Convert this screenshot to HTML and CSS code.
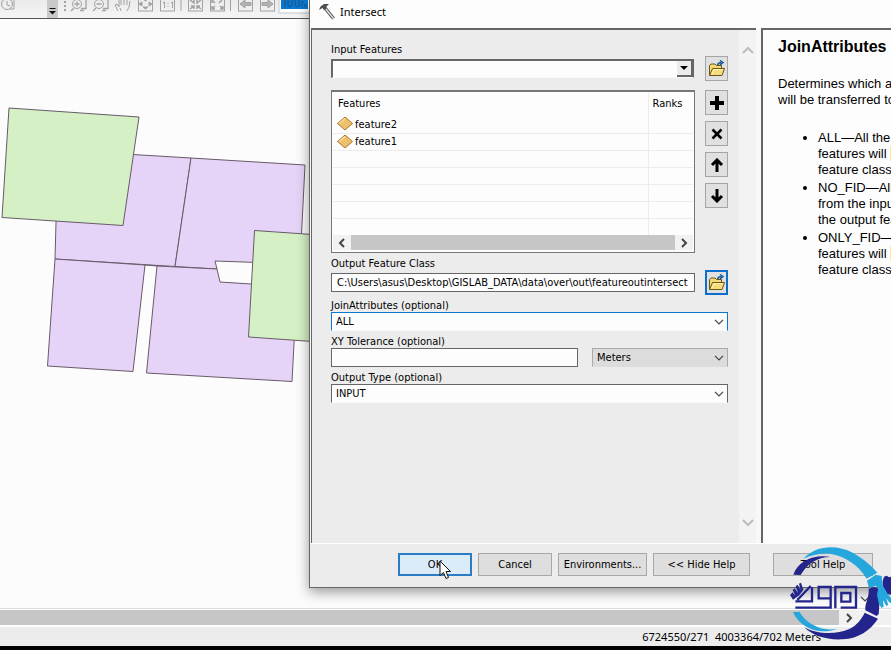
FILE: index.html
```html
<!DOCTYPE html>
<html lang="en">
<head>
<meta charset="utf-8">
<title>Intersect</title>
<link rel="stylesheet" href="styles.css">
</head>
<body>
<svg class="defs" aria-hidden="true">
  <symbol id="folder" viewBox="0 0 18 18">
    <path d="M1.500 15.500V5.500l1.500-1.500h4l1.500 1.500h5v3" fill="#f3d978" stroke="#6b5614"/>
    <path d="M1.500 15.500l3-7h12l-2.500 7z" fill="#f6dc7c" stroke="#6b5614"/>
    <path d="M4 14l2-4.500h9" fill="none" stroke="#fff3b8"/>
    <path d="M9.500 5c.5-2 2-2.500 4-2.500M12 .5l3 2-3 2.500" fill="none" stroke="#17589b" stroke-width="1.500"/>
  </symbol>
  <symbol id="chevron" viewBox="0 0 10 6"><path d="M1 .8l4 4 4-4" fill="none" stroke="#444" stroke-width="1.200"/></symbol>
  <symbol id="diamond" viewBox="0 0 18 16"><path d="M9 1l7.500 6.500L9 14 1.500 7.500z" fill="#eec06c" stroke="#a9752c"/><path d="M9 2.500L3.500 7.500" stroke="#f8dc9c" stroke-width="1.500"/></symbol>
</svg>

<div class="app">
  <header class="toolbar">
    <svg class="tools" width="310" height="18" fill="none" stroke="#a2a2a2">
      <circle cx="7" cy="4" r="5.500"/><path d="M7 1v4l3 1M14 0v9h-4"/>
      <rect x="47" y="0" width="11" height="18" fill="#c9c9c9" stroke="none"/>
      <path d="M49.500 8.500h6" stroke="#111"/><path d="M49 11h7l-3.500 3.500z" fill="#111" stroke="none"/>
      <path d="M65 1v10" stroke-width="2" stroke-dasharray="2 2"/>
      <circle cx="77" cy="4" r="4.500"/><path d="M74.500 4h5M77 1.500v5M74 8l-3 3M81 8.500h5V0M80 10.500h4" stroke-width="1.300"/>
      <circle cx="99" cy="4" r="4.500"/><path d="M96.500 4h5M96 8l-3 3M103 8.500h5V0M102 10.500h4" stroke-width="1.300"/>
      <path d="M118 11l-3-6 2-1 2 3V0M121 5V0M124 5V0M127 5V0M130 1l-1 6-2 4M121 11l-1-3"/>
      <rect x="138.500" y="-4" width="14" height="15"/><path d="M145.500 1l2.500-2h-5zM145.500 9l-2.500-2h5zM139 4l3-2v4zM152 4l-3-2v4z" fill="#a2a2a2"/>
      <rect x="160.500" y="-4" width="14" height="15"/><path d="M163 3l1.500-1v6M171 3l1.500-1v6M168 3v1M168 6v1"/>
      <path d="M181 0v11M230.500 0v11"/>
      <rect x="188.500" y="-4" width="14" height="15"/><path d="M190 0l4 3v-3M201 0l-4 3v-3M190 9l4-3M201 9l-4-3M191 6h3v3M200 6h-3v3" stroke-width="1.500"/>
      <rect x="210.500" y="-4" width="14" height="15"/><path d="M212 3V0M215 3l-3-3M222 0l-3 3M212 6v3h3M212 9l3-3M223 6v3h-3M223 9l-3-3" stroke-width="1.500"/>
      <rect x="238.500" y="-4" width="14" height="15"/><path d="M240 4l5-4v2.500h6v3h-6V8z" fill="#b2b2b2"/>
      <rect x="260.500" y="-4" width="14" height="15"/><path d="M273 4l-5-4v2.500h-6v3h6V8z" fill="#b2b2b2"/>
      <rect x="279" y="-2" width="32" height="15" fill="#fff" stroke="#c8c8c8"/>
      <rect x="281" y="0" width="27" height="9" fill="#0878d0" stroke="none"/>
      <path d="M285 0v7M288 0v5l2 2 2-2V0M295 0v5l2 2 2-2V0M303 1l-2 5M305 4v3" stroke="#20517c"/>
    </svg>
  </header>

  <main class="map">
    <svg class="parcels" aria-label="Map parcels">
      <g transform="translate(0 -19)" stroke="#685a68" stroke-width="1">
        <g fill="#e6d4f8">
          <path d="M58 150l133 8-16 108.500L55 259z"/>
          <path d="M191 158l114 7-5 99-85-3 2 8-42-2.500z"/>
          <path d="M55 259l90 6-12 106.500-85.500-5.500z"/>
          <path d="M145 265l12 1" />
          <path d="M157 266l60 3 3 13 31 2 46 3-5 94.500-145.500-8.500z"/>
        </g>
        <g fill="#d4f0c4">
          <path d="M9 108l130 9-16 108.500-121-8z"/>
          <path d="M254.500 230.500l58 4v107l-64-4.500z"/>
        </g>
      </g>
    </svg>
    <svg class="map-down" width="10" height="6"><use href="#chevron"/></svg>
  </main>
  <div class="map-scroll"><div class="map-thumb"></div><svg width="8" height="10" fill="none" stroke="#444" stroke-width="2"><path d="M2 1l4 4-4 4"/></svg></div>
  <footer class="status">6724550/271&nbsp; 4003364/702 Meters</footer>
</div>

<section class="dialog" role="dialog" aria-labelledby="dialog-title">
  <header class="titlebar">
    <svg width="18" height="18" viewBox="0 0 18 18">
      <path d="M7 5l8.500 10.500" stroke="#555" stroke-width="3.500"/><path d="M7 5l8.500 10.500" stroke="#ddd" stroke-width="1.500"/>
      <path d="M1 7l1.500-3.500L6 1h5L8.500 3.500 8 6 6 7 4.500 5z" fill="#4b4f50"/>
    </svg>
    <h1 id="dialog-title">Intersect</h1>
  </header>
  <div class="panes">
    <div class="form-pane">
      <form class="form" id="tool">
        <label for="in">Input Features</label>
        <div class="row">
          <div class="pick pick-classic"><select id="in"><option></option></select><span class="drop"><svg width="8" height="4"><path d="M0 0h8L4 4z"/></svg></span></div>
          <button class="icon" type="button" aria-label="Browse input"><svg width="18" height="18"><use href="#folder"/></svg></button>
        </div>
        <div class="row list-row">
          <div class="list">
            <table>
              <thead><tr><th>Features</th><th class="rank">Ranks</th></tr></thead>
              <tbody>
                <tr><td><span class="feature"><svg width="18" height="16"><use href="#diamond"/></svg>feature2</span></td><td></td></tr>
                <tr><td><span class="feature"><svg width="18" height="16"><use href="#diamond"/></svg>feature1</span></td><td></td></tr>
                <tr><td></td><td></td></tr>
                <tr><td></td><td></td></tr>
                <tr><td></td><td></td></tr>
                <tr><td></td><td></td></tr>
                <tr><td></td><td></td></tr>
              </tbody>
            </table>
            <div class="hscroll">
              <svg width="8" height="10" fill="none" stroke="#444" stroke-width="2"><path d="M6 1L2 5l4 4"/></svg>
              <div class="thumb"></div>
              <svg width="8" height="10" fill="none" stroke="#444" stroke-width="2"><path d="M2 1l4 4-4 4"/></svg>
            </div>
          </div>
          <div class="side">
            <button class="icon" type="button" aria-label="Add"><svg width="14" height="14"><path d="M7 0v14M0 7h14" stroke="#000" stroke-width="4"/></svg></button>
            <button class="icon" type="button" aria-label="Remove"><svg width="14" height="14"><path d="M2.500 2.500l9 9M11.500 2.500l-9 9" stroke="#000" stroke-width="2.500"/></svg></button>
            <button class="icon" type="button" aria-label="Move up"><svg width="14" height="14"><path d="M7 14V3M2 7l5-5 5 5" fill="none" stroke="#000" stroke-width="3"/></svg></button>
            <button class="icon" type="button" aria-label="Move down"><svg width="14" height="14"><path d="M7 0v11M2 7l5 5 5-5" fill="none" stroke="#000" stroke-width="3"/></svg></button>
          </div>
        </div>
        <label for="out">Output Feature Class</label>
        <div class="row">
          <input id="out" type="text" value="C:\Users\asus\Desktop\GISLAB_DATA\data\over\out\featureoutintersect">
          <button class="icon active" type="button" aria-label="Browse output"><svg width="18" height="18"><use href="#folder"/></svg></button>
        </div>
        <label for="join">JoinAttributes (optional)</label>
        <div class="pick focus"><select id="join"><option>ALL</option></select><svg width="10" height="6"><use href="#chevron"/></svg></div>
        <label for="tol">XY Tolerance (optional)</label>
        <div class="tolerance">
          <input id="tol" type="text">
          <div class="pick muted"><select aria-label="Units"><option>Meters</option></select><svg width="10" height="6"><use href="#chevron"/></svg></div>
        </div>
        <label for="type">Output Type (optional)</label>
        <div class="pick"><select id="type"><option>INPUT</option></select><svg width="10" height="6"><use href="#chevron"/></svg></div>
      </form>
      <div class="vscroll">
        <svg width="12" height="8" fill="none" stroke="#bcbcbc" stroke-width="2"><path d="M1 7l5-5 5 5"/></svg>
        <svg width="12" height="8" fill="none" stroke="#bcbcbc" stroke-width="2"><path d="M1 1l5 5 5-5"/></svg>
      </div>
    </div>
    <article class="help">
      <h2>JoinAttributes (</h2>
      <p>Determines which a<br>will be transferred to</p>
      <ul>
        <li>ALL—All the<br>features will <mark>&nbsp;</mark><br>feature class</li>
        <li>NO_FID—All<br>from the input<br>the output fea</li>
        <li>ONLY_FID—<br>features will <mark>&nbsp;</mark><br>feature class</li>
      </ul>
    </article>
  </div>
  <footer class="actions">
    <button class="default" type="submit" form="tool">OK</button>
    <button type="button">Cancel</button>
    <button class="env" type="button">Environments...</button>
    <button class="hide" type="button">&lt;&lt; Hide Help</button>
    <button class="tool-help" type="button">Tool Help</button>
  </footer>
</section>

<svg class="cursor" width="13" height="20" viewBox="0 0 13 20"><path d="M1 1v14.500l3.500-3 2.500 6 2.500-1-2.500-6h4.500z" fill="#fff" stroke="#111"/></svg>

<svg class="logo" width="121" height="110" viewBox="0 0 363 330" aria-label="Logo">
  <path d="M100 56C136 16 200 12 248 38c34 19 60 42 74 60l-32 18C266 76 226 48 180 41c-28-3-54 4-80 15z" fill="#25a6dc"/>
  <path d="M70 104C84 64 130 42 182 51c-42 0-72 22-90 54z" fill="#23248c"/>
  <path d="M69 216h20c20 36 68 60 112 50-55 22-112-4-132-50z" fill="#25a6dc"/>
  <path d="M103 262c34 20 94 24 135 5 23-12 35-27 46-49l40 18c-24 36-58 59-105 62-48 3-92-11-116-36z" fill="#23248c"/>
  <path d="M338 124l4-14 8-3 7 5 6-2v54l-12-2-13-16zM296 146l16-5 14 5-2 16 5 20-3 40-6 6-34-17c-2-24 12-34 10-65z" fill="#23248c"/>
  <path d="M291 122l26-18 18 4 3 28 14 24 11 14v16l-6-4-9-12 7 20-6 4-10-18 2 20-7 4-8-16-5-24 4-20-8-6-20 6z" fill="#25a6dc"/>
  <g fill="none" stroke="#23248c" stroke-width="7">
    <path d="M76 203h106v-62h-36v34h34M76 184h50v-43M82 180l40-42"/>
    <path d="M196 205v-64h62v62h-46M214 159h27v26h-27z"/>
  </g>
  <path d="M60 165l8-8 8 10-8-17 6-5 10 14-7-20 6-5 9 17-5-20 6-3 7 21-12 17-19 13z" fill="#23248c"/>
</svg>
</body>
</html>
```
FILE: styles.css
```css
* { box-sizing: border-box; }

body {
  margin: 0;
  position: relative;
  min-height: 100vh;
  overflow: hidden;
  background: #000;
  color: #000;
  font: 11px/13px "DejaVu Sans Condensed", "Liberation Sans", sans-serif;
}

button, input, select { font: inherit; color: inherit; border-radius: 0; margin: 0; }
svg { display: block; flex: none; }
.defs { position: absolute; width: 0; height: 0; }

.app {
  display: flex;
  flex-direction: column;
  height: 100vh;
  padding-bottom: 4px;
}
.toolbar {
  height: 19px;
  background: linear-gradient(#ebebeb, #f5f5f5);
  border-bottom: 1px solid #555;
}
.map { position: relative; flex: 1; background: #fcfcfc; border-bottom: 1px solid #ddd; }
.parcels { width: 100%; height: 100%; }
.map-down { position: absolute; right: 21px; bottom: 6px; }
.map-scroll {
  display: flex;
  align-items: center;
  height: 16px;
  background: #f1f1f1;
  border-top: 1px solid #fff;
  padding-right: 38px;
  gap: 6px;
}
.map-thumb { flex: 1; height: 15px; background: #c6c6c6; }
.status {
  height: 21px;
  padding: 0 70px 0 0;
  background: #ececec;
  border-top: 2px solid #fff;
  font: 11px/20px "Noto Sans", sans-serif;
  text-align: right;
}

.dialog {
  position: absolute;
  top: 0;
  bottom: 62px;
  left: 309px;
  right: -24px;
  display: flex;
  flex-direction: column;
  background: #ececec;
  border: 1px solid #666;
  border-width: 0 0 1px 1px;
  box-shadow: 0 4px 12px rgba(0, 0, 0, .4);
}
.titlebar {
  display: flex;
  align-items: center;
  gap: 4px;
  height: 28px;
  padding: 0 8px 4px;
  background: #fdfdfd;
}
h1 { margin: 0; font: 11px/16px "Noto Sans", sans-serif; }
.panes { flex: 1; display: flex; gap: 5px; padding-left: 1px; background: #f8f8f8; min-height: 0; border-bottom: 1px solid #fff; }
.form-pane {
  display: flex;
  width: 445px;
  border: 2px solid #666;
  border-width: 2px 0 0 1px;
  background: #ececec;
}
.form { flex: 1; padding: 13px 11px 0 19px; }
.vscroll {
  width: 17px;
  display: flex;
  flex-direction: column;
  justify-content: space-between;
  align-items: center;
  padding: 16px 0;
  background: #f3f3f3;
}
.form label { display: block; margin-top: 4px; height: 13px; }
.form label:first-child { margin-top: 0; }
.row { display: flex; align-items: center; gap: 10px; }
.row > :first-child { flex: 1; min-width: 0; }

input[type="text"] {
  height: 19px;
  padding: 0 5px;
  background: #fdfdfd;
  border: 1px solid #666;
  outline: 0;
}
.pick { position: relative; display: flex; }
.pick select {
  appearance: none;
  width: 100%;
  height: 19px;
  padding: 0 4px;
  background: #fdfdfd;
  border: 1px solid #666;
  border-bottom-color: #f8f8f8;
}
.pick > svg { position: absolute; right: 4px; top: 7px; pointer-events: none; }
.pick.focus select { border-color: #0878d0; border-bottom-color: #f8f8f8; }
.pick.muted select { background: #dcdcdc; border-color: #aaa; border-bottom-color: #dcdcdc; }
.pick-classic { margin-right: 1px; }
.pick-classic select { border-width: 2px 1px 1px 2px; }
.drop {
  position: absolute;
  top: 2px;
  right: 1px;
  width: 16px;
  height: 16px;
  display: grid;
  place-items: center;
  background: #ececec;
  border: 1px solid #666;
  border-width: 0 2px 2px 0;
  pointer-events: none;
}

.icon {
  width: 23px;
  height: 25px;
  padding: 0;
  display: grid;
  place-items: center;
  background: #e0e0e0;
  border: 1px solid #a5a5a5;
}
.icon.active { border: 2px solid #0b6fcb; }

.list-row { margin-top: 9px; align-items: flex-start; }
.list { height: 163px; padding: 1px; background: #fdfdfd; border: 1px solid #777; border-width: 2px 1px 1px 1px; }
.side { display: flex; flex-direction: column; gap: 6px; }
table { width: 100%; border-collapse: collapse; table-layout: fixed; }
th { height: 23px; padding: 0 5px 2px; text-align: left; font-weight: normal; }
th.rank { width: 45px; padding: 0 4px 2px; }
th + th, td + td { border-left: 1px solid #ececec; }
td { height: 17px; padding: 0 3px; border-bottom: 1px solid #ececec; }
tr:last-child td { border-bottom: 0; }
.feature { display: flex; align-items: center; gap: 1px; height: 16px; }
.hscroll { display: flex; align-items: center; gap: 5px; padding: 0 5px; background: #f1f1f1; }
.thumb { flex: 1; height: 15px; background: #c6c6c6; }

.tolerance { display: flex; gap: 14px; }
.tolerance input { flex: 1; min-width: 0; }
.tolerance .pick { width: 136px; }

.help {
  flex: 1;
  min-width: 0;
  padding: 8px 0 0 15px;
  background: #fdfdfd;
  border: 2px solid #666;
  border-width: 2px 0 0 2px;
  font: 13px/16px "Liberation Sans", sans-serif;
  white-space: nowrap;
  overflow: hidden;
}
h2 { margin: 0; font-size: 16px; line-height: 18px; }
.help p { margin: 20px 0 22px; }
.help ul { margin: 0; padding-left: 40px; }
.help li { margin-bottom: 2px; }
mark { background: #ffe9a0; }

.actions { display: flex; align-items: flex-start; gap: 6px; height: 43px; padding: 9px 0 0 88px; }
.actions button { width: 74px; height: 23px; padding: 0; background: #dedede; border: 1px solid #a8a8a8; }
.actions .default { background: #dcebf8; border: 2px solid #2a7cc4; }
.actions .env { width: 89px; }
.actions .hide { width: 97px; }
.actions .tool-help { width: 100px; margin-left: 17px; }

.cursor { position: absolute; left: 439px; top: 560px; }
.logo { position: absolute; right: 0; bottom: 0; }
```
